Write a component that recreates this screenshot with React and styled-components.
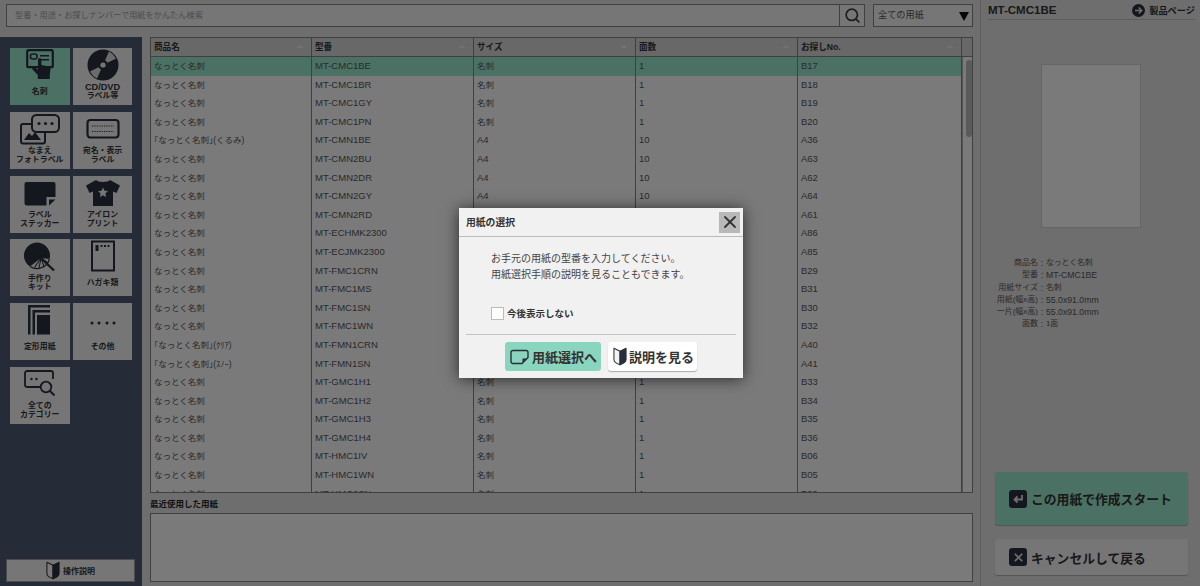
import React from 'react';
import styled, {createGlobalStyle} from 'styled-components';
import {Search, X} from 'lucide-react';

const INK = '#2b2f3c';

const hasCjk = (text) => /[^\x00-\x7f]/.test(text);

const papers = [
  ['なっとく名刺', 'MT-CMC1BE', '名刺', '1', 'B17'],
  ['なっとく名刺', 'MT-CMC1BR', '名刺', '1', 'B18'],
  ['なっとく名刺', 'MT-CMC1GY', '名刺', '1', 'B19'],
  ['なっとく名刺', 'MT-CMC1PN', '名刺', '1', 'B20'],
  ['｢なっとく名刺｣(くるみ)', 'MT-CMN1BE', 'A4', '10', 'A36'],
  ['なっとく名刺', 'MT-CMN2BU', 'A4', '10', 'A63'],
  ['なっとく名刺', 'MT-CMN2DR', 'A4', '10', 'A62'],
  ['なっとく名刺', 'MT-CMN2GY', 'A4', '10', 'A64'],
  ['なっとく名刺', 'MT-CMN2RD', 'A4', '10', 'A61'],
  ['なっとく名刺', 'MT-ECHMK2300', 'A4', '10', 'A86'],
  ['なっとく名刺', 'MT-ECJMK2300', 'A4', '10', 'A85'],
  ['なっとく名刺', 'MT-FMC1CRN', '名刺', '1', 'B29'],
  ['なっとく名刺', 'MT-FMC1MS', '名刺', '1', 'B31'],
  ['なっとく名刺', 'MT-FMC1SN', '名刺', '1', 'B30'],
  ['なっとく名刺', 'MT-FMC1WN', '名刺', '1', 'B32'],
  ['｢なっとく名刺｣(ｸﾘｱ)', 'MT-FMN1CRN', 'A4', '10', 'A40'],
  ['｢なっとく名刺｣(ｽﾉｰ)', 'MT-FMN1SN', 'A4', '10', 'A41'],
  ['なっとく名刺', 'MT-GMC1H1', '名刺', '1', 'B33'],
  ['なっとく名刺', 'MT-GMC1H2', '名刺', '1', 'B34'],
  ['なっとく名刺', 'MT-GMC1H3', '名刺', '1', 'B35'],
  ['なっとく名刺', 'MT-GMC1H4', '名刺', '1', 'B36'],
  ['なっとく名刺', 'MT-HMC1IV', '名刺', '1', 'B06'],
  ['なっとく名刺', 'MT-HMC1WN', '名刺', '1', 'B05'],
  ['なっとく名刺', 'MT-HMC2SN', '名刺', '1', 'B09'],
];

const columns = ['商品名', '型番', 'サイズ', '面数', 'お探しNo.'];

const details = [
  ['商品名', 'なっとく名刺'],
  ['型番', 'MT-CMC1BE'],
  ['用紙サイズ', '名刺'],
  ['用紙(幅x高)', '55.0x91.0mm'],
  ['一片(幅x高)', '55.0x91.0mm'],
  ['面数', '1面'],
];

function Glyph({children}) {
  return <svg width="40" height="32" viewBox="0 0 40 32" fill={INK}>{children}</svg>;
}

const categories = [
  {
    lines: ['名刺'],
    active: true,
    icon: (
      <Glyph>
        <rect x="7.2" y="1.2" width="25.6" height="17" rx="1.5" fill="none" stroke={INK} strokeWidth="2.2" />
        <rect x="10.5" y="5" width="6.5" height="5" rx="2" fill="none" stroke={INK} strokeWidth="1.6" />
        <path d="M20 6h9v1.500h-9zM20 10h9v1.500h-9z" />
        <path d="M18 10.500c0-1.600 3.400-1.600 3.400 0v5.500l7.600 1.400c1.100.2 1.600 1 1.500 2l-.7 6.600v4h-12v-4l-5.300-5.600c-1-1.200.6-3 2-2l3.500 2.200z" />
      </Glyph>
    ),
  },
  {
    lines: ['CD/DVD', 'ラベル等'],
    icon: (
      <Glyph>
        <circle cx="20" cy="16" r="15.500" />
        <path d="M20 16 26 2.500A15 15 0 0 1 33 9.500zM20 16 14 29.500A15 15 0 0 1 7 22.500z" fill="#ececec" opacity=".9" />
        <circle cx="20" cy="16" r="5" />
        <circle cx="20" cy="16" r="2.600" fill="#ececec" />
      </Glyph>
    ),
  },
  {
    lines: ['なまえ', 'フォトラベル'],
    icon: (
      <Glyph>
        <rect x="1" y="11" width="24" height="19.500" rx="2" fill="none" stroke={INK} strokeWidth="2" />
        <path d="M4 27l5-7 3 3 3-4 6 8z" />
        <rect x="12" y="2" width="27" height="17" rx="4.500" fill="#ececec" stroke={INK} strokeWidth="2" />
        <circle cx="19" cy="10.500" r="1.600" /><circle cx="25.500" cy="10.500" r="1.600" /><circle cx="32" cy="10.500" r="1.600" />
      </Glyph>
    ),
  },
  {
    lines: ['宛名・表示', 'ラベル'],
    icon: (
      <Glyph>
        <rect x="4.500" y="7" width="31" height="17.500" rx="3" fill="none" stroke={INK} strokeWidth="2.200" />
        <path d="M9 13h22M9 18.500h22" fill="none" stroke={INK} strokeWidth="1.100" strokeDasharray="1.200 1.200" />
      </Glyph>
    ),
  },
  {
    lines: ['ラベル', 'ステッカー'],
    icon: (
      <Glyph>
        <path d="M6.500 5h27a2 2 0 0 1 2 2v13l-9 0v8.500h-20a2.500 2.500 0 0 1-2-2.500v-19a2 2 0 0 1 2-2z" />
        <path d="M29 22.500h6.500l-6.500 6z" />
      </Glyph>
    ),
  },
  {
    lines: ['アイロン', 'プリント'],
    icon: (
      <Glyph>
        <path fillRule="evenodd" d="M13 3c1.500 2.500 12.500 2.500 14 0l10 5.500-3.500 7.500-3.500-1.500v14.500h-20v-14.500l-3.500 1.500-3.500-7.500zM20 10.500l1.500 3.200 3.500.4-2.600 2.300.7 3.500-3.100-1.700-3.100 1.700.7-3.500-2.600-2.300 3.500-.4z" />
      </Glyph>
    ),
  },
  {
    lines: ['手作り', 'キット'],
    icon: (
      <Glyph>
        <path d="M21 18L10 26.500A13 13 0 1 1 29.500 19z" />
        <path d="M10 26.500A13 13 0 0 0 29.500 19" fill="none" stroke={INK} strokeWidth="1.200" />
        <path d="M21 18L14.500 27.500M21 18L19 28M21 18L24 26.500M21 18L28 23" fill="none" stroke={INK} strokeWidth="1.100" />
        <path d="M21 18L34 30.500" fill="none" stroke={INK} strokeWidth="2.400" />
      </Glyph>
    ),
  },
  {
    lines: ['ハガキ類'],
    icon: (
      <Glyph>
        <rect x="9" y="1.500" width="22" height="29" fill="none" stroke={INK} strokeWidth="2" />
        <rect x="12.500" y="5" width="3" height="6" />
        <path d="M17.500 5h2v2h-2zM21 5h2v2h-2zM24.500 5h2v2h-2z" />
      </Glyph>
    ),
  },
  {
    lines: ['定形用紙'],
    icon: (
      <Glyph>
        <path d="M8 1h22v2.500h-19.500v27h-2.500z" />
        <path d="M12.500 6h17.500v2.500h-15v22h-2.500z" />
        <rect x="17" y="11" width="13" height="19.500" />
      </Glyph>
    ),
  },
  {
    lines: ['その他'],
    icon: (
      <Glyph>
        <circle cx="9" cy="19" r="1.500" /><circle cx="16" cy="19" r="1.500" />
        <circle cx="24" cy="19" r="1.500" /><circle cx="31" cy="19" r="1.500" />
      </Glyph>
    ),
  },
  {
    lines: ['全ての', 'カテゴリー'],
    icon: (
      <Glyph>
        <path d="M20 19H7a2 2 0 0 1-2-2V5a2 2 0 0 1 2-2h24a2 2 0 0 1 2 2v6" fill="none" stroke={INK} strokeWidth="1.800" />
        <circle cx="11.500" cy="11" r="1.200" /><circle cx="16.500" cy="11" r="1.200" />
        <circle cx="26" cy="19" r="5.300" fill="none" stroke={INK} strokeWidth="1.800" />
        <path d="M30 23l4.500 4.500" fill="none" stroke={INK} strokeWidth="2" />
      </Glyph>
    ),
  },
];

function BeginnerMark({width}) {
  return (
    <svg width={width} height={width * 1.3} viewBox="0 0 16 21">
      <path d="M1 1.500l7 3.500v15.500c-4-1.200-7-3-7-6z" fill="#f4f4f4" stroke={INK} strokeWidth="1.200" strokeLinejoin="round" />
      <path d="M15 1.500l-7 3.500v15.500c4-1.200 7-3 7-6z" fill={INK} stroke={INK} strokeWidth="1.200" strokeLinejoin="round" />
    </svg>
  );
}

export default function App() {
  return (
    <>
      <GlobalStyle />
      <Page>
        <MainColumn>
          <Toolbar>
            <SearchBox>
              <SearchPlaceholder>型番・用途・お探しナンバーで用紙をかんたん検索</SearchPlaceholder>
              <SearchButton><Search size={17} strokeWidth={2.4} color="#3a3a3a" /></SearchButton>
            </SearchBox>
            <PaperSelect>全ての用紙<SelectArrow /></PaperSelect>
          </Toolbar>
          <Workspace>
            <Sidebar>
              <TileGrid>
                {categories.map((c) => (
                  <Tile key={c.lines[0]} $active={c.active}>
                    <TileIcon>{c.icon}</TileIcon>
                    <TileLabel>
                      {c.lines.map((l) => <TileLine key={l} $latin={!hasCjk(l)}>{l}</TileLine>)}
                    </TileLabel>
                  </Tile>
                ))}
              </TileGrid>
              <HelpButton><BeginnerMark width={14} />操作説明</HelpButton>
            </Sidebar>
            <Content>
              <PaperTable>
                <HeaderRow>
                  {columns.map((c) => <HeaderCell key={c}>{c}<SortMark /></HeaderCell>)}
                  <HeaderCorner />
                </HeaderRow>
                <TableBody>
                  <Rows>
                    {papers.map((row, i) => (
                      <Row key={row[1]} $selected={i === 0}>
                        {row.map((v, j) => <Cell key={j} $cjk={hasCjk(v)}>{v}</Cell>)}
                      </Row>
                    ))}
                  </Rows>
                  <ScrollTrack><ScrollThumb /></ScrollTrack>
                </TableBody>
              </PaperTable>
              <RecentTitle>最近使用した用紙</RecentTitle>
              <RecentBox />
            </Content>
          </Workspace>
        </MainColumn>
        <DetailPanel>
          <DetailHead>
            <DetailCode>MT-CMC1BE</DetailCode>
            <ProductLink>
              <svg width="13" height="13" viewBox="0 0 13 13">
                <circle cx="6.500" cy="6.500" r="6.500" fill={INK} />
                <path d="M3 6.500h6.500M6.700 3.500l3 3-3 3" fill="none" stroke="#ddd" strokeWidth="1.500" />
              </svg>
              製品ページ
            </ProductLink>
          </DetailHead>
          <Preview />
          <DetailList>
            {details.map(([k, v]) => (
              <DetailRow key={k}>
                <DetailKey>{k}</DetailKey>
                <DetailColon>:</DetailColon>
                <DetailValue $cjk={hasCjk(v)}>{v}</DetailValue>
              </DetailRow>
            ))}
          </DetailList>
          <Actions>
            <StartButton>
              <ActionIcon>
                <svg width="12" height="12" viewBox="0 0 12 12">
                  <path d="M10 2v4.500H3M5.500 3.500 2.500 6.500l3 3" fill="none" stroke="#ddd" strokeWidth="1.800" />
                </svg>
              </ActionIcon>
              この用紙で作成スタート
            </StartButton>
            <CancelButton>
              <ActionIcon><X size={13} strokeWidth={3.2} color="#ddd" /></ActionIcon>
              キャンセルして戻る
            </CancelButton>
          </Actions>
        </DetailPanel>
        <Overlay>
          <Dialog>
            <DialogHead>
              用紙の選択
              <CloseButton><X size={20} strokeWidth={2.2} color="#333" /></CloseButton>
            </DialogHead>
            <DialogBody>
              <Message>お手元の用紙の型番を入力してください。<br />用紙選択手順の説明を見ることもできます。</Message>
              <CheckRow><CheckBox />今後表示しない</CheckRow>
            </DialogBody>
            <DialogFoot>
              <PrimaryButton>
                <svg width="19" height="16" viewBox="0 0 19 16">
                  <path d="M3 1.500h13a2 2 0 0 1 2 2v5l-6 6h-9a2 2 0 0 1-2-2v-9a2 2 0 0 1 2-2z" fill="none" stroke={INK} strokeWidth="1.400" />
                  <path d="M17.500 9.500h-5v4.500z" fill={INK} />
                </svg>
                用紙選択へ
              </PrimaryButton>
              <GuideButton><BeginnerMark width={14} />説明を見る</GuideButton>
            </DialogFoot>
          </Dialog>
        </Overlay>
      </Page>
    </>
  );
}

const GlobalStyle = createGlobalStyle`
  html, body {
    margin: 0;
    height: 100%;
    overflow: hidden;
  }
  body {
    font-family: "Liberation Sans", "Noto Sans CJK JP", sans-serif;
    font-size: 10px;
    color: #333;
  }
  * {
    box-sizing: border-box;
  }
`;

const Page = styled.div`
  position: relative;
  display: flex;
  width: 1200px;
  height: 586px;
  background-color: #dcdcdc;
  overflow: hidden;
`;

const MainColumn = styled.div`
  display: flex;
  flex-direction: column;
  width: 980px;
`;

const Toolbar = styled.div`
  display: flex;
  gap: 8px;
  height: 37px;
  padding: 4px 7px 0 6px;
`;

const SearchBox = styled.div`
  display: flex;
  justify-content: space-between;
  width: 859px;
  height: 23px;
  border: 1px solid #808080;
  background-color: #ececec;
`;

const SearchPlaceholder = styled.div`
  padding-left: 8px;
  line-height: 21px;
  font-size: 8.2px;
  color: #999;
`;

const SearchButton = styled.div`
  display: flex;
  align-items: center;
  justify-content: center;
  width: 25px;
  border-left: 1px solid #808080;
`;

const PaperSelect = styled.div`
  position: relative;
  width: 100px;
  height: 23px;
  border: 1px solid #808080;
  padding-left: 4px;
  font-size: 9.2px;
  line-height: 21px;
  background-color: #ececec;
  color: #555;
`;

const SelectArrow = styled.span`
  position: absolute;
  right: 3px;
  top: 7px;
  border-left: 5px solid transparent;
  border-right: 5px solid transparent;
  border-top: 9px solid #111;
`;

const Workspace = styled.div`
  display: flex;
  flex: 1;
  min-height: 0;
`;

const Sidebar = styled.div`
  display: flex;
  flex-direction: column;
  justify-content: space-between;
  width: 142px;
  padding: 11px 7px 4px 6px;
  background-color: #4c5670;
`;

const TileGrid = styled.div`
  display: grid;
  grid-template-columns: 59.5px 59px;
  grid-auto-rows: 57px;
  column-gap: 3.5px;
  row-gap: 6.8px;
  padding-left: 4px;
`;

const Tile = styled.div`
  display: flex;
  flex-direction: column;
  padding-top: 1px;
  background-color: ${(props) => (props.$active ? '#94e2c8' : '#ececec')};
`;

const TileIcon = styled.div`
  display: flex;
  justify-content: center;
  height: 33.5px;
`;

const TileLabel = styled.div`
  display: flex;
  flex-direction: column;
  align-items: center;
  justify-content: center;
  height: 19px;
  line-height: 8.8px;
  font-weight: 700;
  color: #333;
  white-space: nowrap;
`;

const TileLine = styled.span`
  font-size: ${(props) => (props.$latin ? '9.2px' : '7.9px')};
`;

const HelpButton = styled.div`
  display: flex;
  align-items: center;
  justify-content: center;
  gap: 3px;
  width: 129px;
  height: 23px;
  border: 1px solid #999;
  background-color: #ececec;
  font-size: 8px;
  font-weight: 700;
`;

const Content = styled.div`
  display: flex;
  flex-direction: column;
  width: 823px;
  margin-left: 8px;
`;

const PaperTable = styled.div`
  display: flex;
  flex-direction: column;
  height: 456px;
  border: 1px solid #808080;
  background-color: #f4f4f4;
`;

const HeaderRow = styled.div`
  display: grid;
  grid-template-columns: 161px 162px 162px 162px 164px 1fr;
  height: 19px;
  border-bottom: 1px solid #808080;
  background-color: #d0d0d0;
`;

const HeaderCell = styled.div`
  position: relative;
  padding-left: 3px;
  border-right: 1px solid #808080;
  line-height: 18px;
  font-size: 8.6px;
  font-weight: 700;
  color: #333;
`;

const SortMark = styled.span`
  position: absolute;
  right: 7px;
  top: 7px;
  border-left: 4px solid transparent;
  border-right: 4px solid transparent;
  border-bottom: 3px solid #e4e4e4;
`;

const HeaderCorner = styled.div``;

const TableBody = styled.div`
  display: flex;
  flex: 1;
  min-height: 0;
  overflow: hidden;
`;

const Rows = styled.div`
  width: 811px;
`;

const Row = styled.div`
  display: grid;
  grid-template-columns: 161px 162px 162px 162px 164px;
  height: 18.6px;
  background-color: ${(props) => (props.$selected ? '#94e2c8' : 'transparent')};
`;

const Cell = styled.div`
  padding-left: 3px;
  border-right: 1px solid #808080;
  line-height: 18.6px;
  font-size: ${(props) => (props.$cjk ? '8.5px' : '9.5px')};
  color: #555;
  white-space: nowrap;
  overflow: hidden;
`;

const ScrollTrack = styled.div`
  flex: 1;
  padding: 3px 3px 0 3px;
  border-left: 1px solid #aaa;
`;

const ScrollThumb = styled.div`
  width: 6px;
  height: 77px;
  border-radius: 3px;
  background-color: #b4b4b4;
`;

const RecentTitle = styled.div`
  height: 20px;
  padding-top: 5px;
  font-size: 8.5px;
  line-height: 12px;
  font-weight: 700;
  color: #222;
`;

const RecentBox = styled.div`
  height: 69px;
  border: 1px solid #808080;
  background-color: #f4f4f4;
`;

const DetailPanel = styled.div`
  display: flex;
  flex-direction: column;
  width: 220px;
  padding: 0 5px 11px 7px;
  border-left: 1px solid #bbb;
`;

const DetailHead = styled.div`
  display: flex;
  justify-content: space-between;
  align-items: center;
  height: 20px;
  padding-top: 1px;
  border-bottom: 1px solid #bbb;
`;

const DetailCode = styled.div`
  font-size: 11.5px;
  font-weight: 700;
  color: #333;
`;

const ProductLink = styled.div`
  display: flex;
  align-items: center;
  gap: 4px;
  font-size: 9.2px;
  font-weight: 700;
  color: #333;
`;

const Preview = styled.div`
  align-self: center;
  width: 100px;
  height: 164px;
  margin: 44px 0 0 -2px;
  border: 1px solid #ccc;
  background-color: #f4f4f4;
`;

const DetailList = styled.div`
  display: flex;
  flex-direction: column;
  margin-top: 29px;
  font-size: 8.7px;
  line-height: 12.3px;
  color: #555;
`;

const DetailRow = styled.div`
  display: grid;
  grid-template-columns: 50px 8px 1fr;
  justify-items: start;
`;

const DetailKey = styled.span`
  justify-self: end;
  font-size: 8px;
  white-space: nowrap;
`;

const DetailColon = styled.span`
  justify-self: center;
`;

const DetailValue = styled.span`
  font-size: ${(props) => (props.$cjk ? '7.8px' : '8.7px')};
`;

const Actions = styled.div`
  display: flex;
  flex-direction: column;
  gap: 14px;
  margin-top: auto;
  padding: 0 7px;
`;

const ActionIcon = styled.span`
  display: flex;
  align-items: center;
  justify-content: center;
  width: 18px;
  height: 18px;
  border-radius: 3px;
  background-color: ${INK};
`;

const StartButton = styled.div`
  display: flex;
  align-items: center;
  gap: 4px;
  height: 53px;
  padding-left: 14px;
  border-radius: 3px;
  background-color: #94e2c8;
  box-shadow: 0 1px 1px rgba(0, 0, 0, 0.25);
  font-size: 12.8px;
  font-weight: 700;
  color: #333;
`;

const CancelButton = styled(StartButton)`
  height: 36px;
  background-color: #ececec;
`;

const Overlay = styled.div`
  position: absolute;
  inset: 0;
  display: flex;
  align-items: center;
  justify-content: center;
  padding-left: 2px;
  background-color: rgba(0, 0, 0, 0.5);
`;

const Dialog = styled.div`
  display: flex;
  flex-direction: column;
  width: 284px;
  height: 170px;
  background-color: #f1f1f1;
  box-shadow: 0 1px 14px rgba(0, 0, 0, 0.65);
`;

const DialogHead = styled.div`
  display: flex;
  align-items: center;
  justify-content: space-between;
  height: 29px;
  padding: 0 3px 0 7px;
  border-bottom: 1px solid #bbb;
  font-size: 9.8px;
  font-weight: 700;
  color: #333;
`;

const CloseButton = styled.div`
  display: flex;
  align-items: center;
  justify-content: center;
  width: 21px;
  height: 21px;
  background-color: #b8b8b8;
`;

const DialogBody = styled.div`
  display: flex;
  flex-direction: column;
  justify-content: space-between;
  height: 98px;
  margin: 0 7px;
  padding: 14px 25px 14px 25px;
  border-bottom: 1px solid #c4c4c4;
`;

const Message = styled.div`
  font-size: 10px;
  line-height: 15.5px;
  color: #444;
  white-space: nowrap;
`;

const CheckRow = styled.div`
  display: flex;
  align-items: center;
  gap: 3px;
  font-size: 9.5px;
  font-weight: 700;
  color: #333;
`;

const CheckBox = styled.span`
  width: 13px;
  height: 13px;
  border: 1px solid #bbb;
  background-color: #fff;
`;

const DialogFoot = styled.div`
  display: flex;
  gap: 7px;
  padding: 7px 0 0 46px;
`;

const PrimaryButton = styled.div`
  display: flex;
  align-items: center;
  gap: 3px;
  width: 96px;
  height: 29px;
  padding-left: 5px;
  border-radius: 3px;
  background-color: #8ad5be;
  font-size: 13px;
  font-weight: 700;
  color: #333;
  white-space: nowrap;
`;

const GuideButton = styled(PrimaryButton)`
  width: 89px;
  gap: 2px;
  background-color: #fff;
  box-shadow: 0 1px 1px rgba(0, 0, 0, 0.3);
`;
